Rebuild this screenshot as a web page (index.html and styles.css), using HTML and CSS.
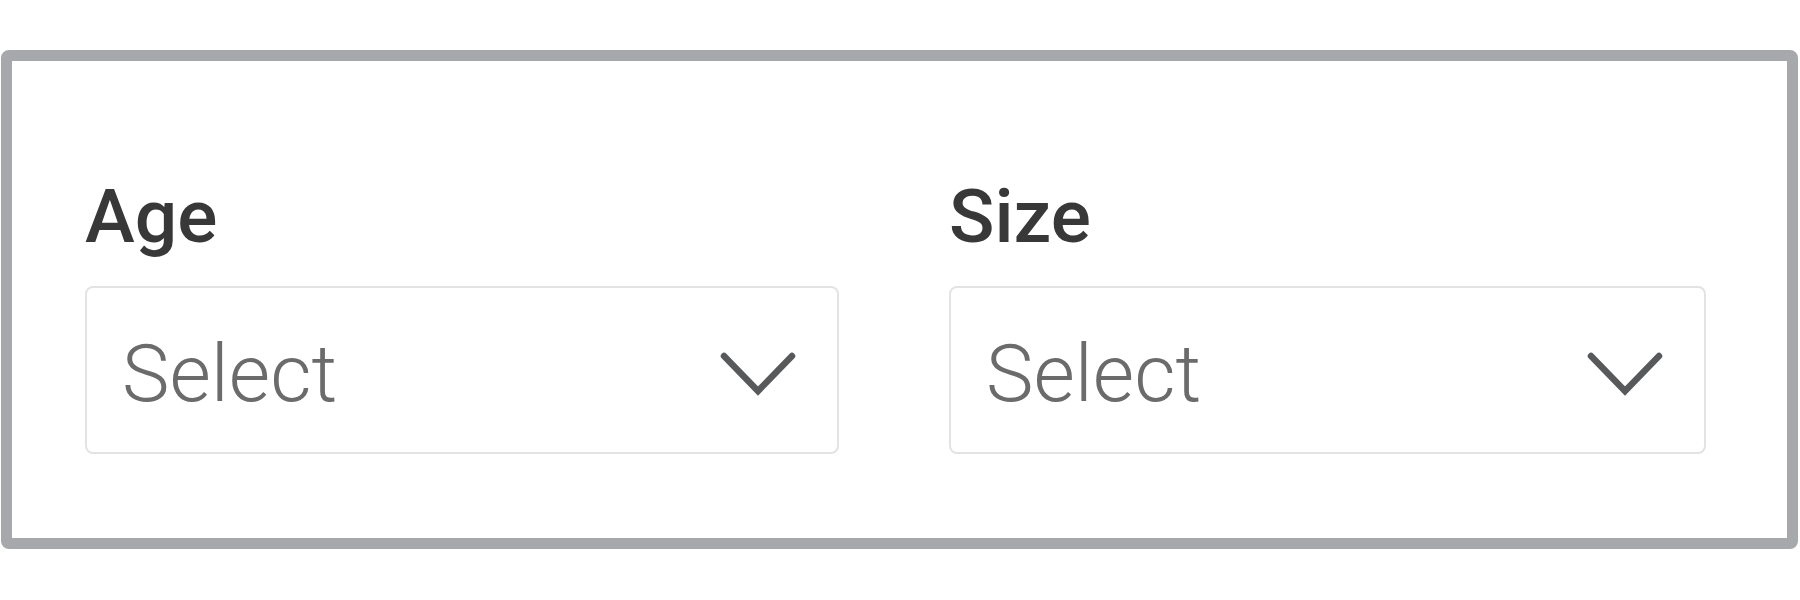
FILE: index.html
```html
<!DOCTYPE html>
<html lang="en">
<head>
    <meta charset="UTF-8">
    <meta name="viewport" content="width=device-width, initial-scale=1.0">
    <title>Filters</title>
    <link rel="stylesheet" href="styles.css">
</head>
<body>
<div class="panel">
    <div class="field">
        <label class="field-label" for="age">Age</label>
        <div class="select" id="age">
            <span class="select-text">Select</span>
            <svg class="chevron" viewBox="0 0 78 46" width="78" height="46">
                <polyline points="5,5 39,40 73,5"></polyline>
            </svg>
        </div>
    </div>
    <div class="field">
        <label class="field-label" for="size">Size</label>
        <div class="select" id="size">
            <span class="select-text">Select</span>
            <svg class="chevron" viewBox="0 0 78 46" width="78" height="46">
                <polyline points="5,5 39,40 73,5"></polyline>
            </svg>
        </div>
    </div>
</div>
</body>
</html>
```

FILE: styles.css
```css
body {
    margin: 0;
    background: #fff;
}
.panel {
    box-sizing: border-box;
    margin: 50px 0 0 1px;
    width: 1797px;
    height: 499px;
    border: 11px solid #a7a8ab;
    border-radius: 8px;
    padding: 118px 0 0 73px;
    display: grid;
    grid-template-columns: 754px 757px;
    column-gap: 110px;
    align-items: start;
}
.field {
    display: flex;
    flex-direction: column;
}
.field-label {
    font-family: Roboto, "Liberation Sans", sans-serif;
    font-weight: 500;
    font-size: 75px;
    line-height: 75px;
    color: #383838;
    margin-bottom: 32px;
}
.select {
    box-sizing: border-box;
    height: 168px;
    border: 2px solid #e3e3e3;
    border-radius: 8px;
    padding: 8px 40px 0 35px;
    display: flex;
    align-items: center;
    justify-content: space-between;
}
.select-text {
    font-family: Roboto, "Liberation Sans", sans-serif;
    font-weight: 300;
    font-size: 80px;
    line-height: 80px;
    color: #6b6b6b;
}
.chevron {
    fill: none;
    stroke: #58595b;
    stroke-width: 6.5;
    stroke-linecap: round;
    stroke-linejoin: miter;
}
```
